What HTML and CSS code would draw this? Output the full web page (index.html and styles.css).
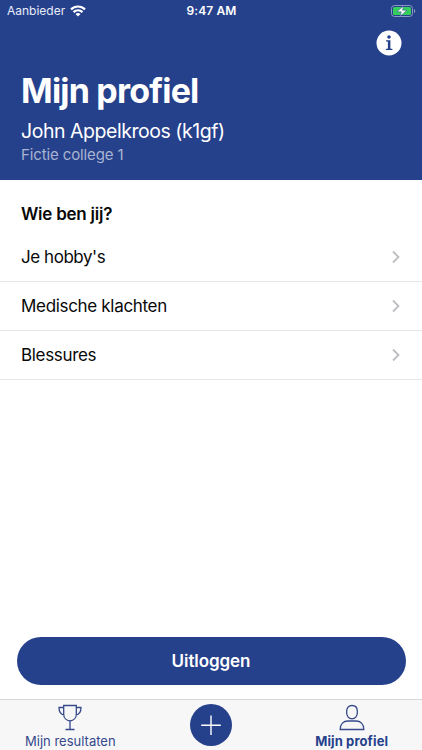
FILE: index.html
```html
<!DOCTYPE html>
<html lang="nl">
<head>
<meta charset="utf-8">
<meta name="viewport" content="width=device-width, initial-scale=1">
<title>Mijn profiel</title>
<link rel="stylesheet" href="styles.css">
</head>
<body>
<div class="app">
  <header class="header">
    <div class="status">
      <div class="status-left">
        <span class="carrier">Aanbieder</span>
        <svg class="wifi" width="16" height="12" viewBox="0 0 16 12" fill="none" stroke="#fff" stroke-width="2.2">
          <path d="M1 4.400C5 .5 11 .5 15 4.400M3.500 7.100C6.100 4.700 9.900 4.700 12.500 7.100"/>
          <path d="M8 11.400 5.500 8.900C6.900 7.700 9.100 7.700 10.500 8.900Z" fill="#fff" stroke="none"/>
        </svg>
      </div>
      <span class="time">9:47 AM</span>
      <svg class="battery" width="25" height="12" viewBox="0 0 25 12">
        <rect x=".5" y=".5" width="21" height="11" rx="3" fill="none" stroke="#8c9bc5"/>
        <rect x="2" y="2" width="18" height="8" rx="1.6" fill="#35d05c"/>
        <path d="M23 4v4c.8-.3 1.200-1 1.200-2S23.800 4.300 23 4Z" fill="#8c9bc5"/>
        <path d="M12.600 1 5.800 6.800H10.300L9 11.200 16 5.200H11.500Z" fill="#fff" stroke="#26418c" stroke-width=".5"/>
      </svg>
    </div>
    <div class="actions">
      <svg width="26" height="26" viewBox="0 0 26 26">
        <circle cx="13" cy="13" r="12.500" fill="#fff"/>
        <circle cx="13" cy="7" r="1.800" fill="#26418c"/>
        <path d="M10 10.300H14.400V18.600L16.400 19V20H9.900V19L11.900 18.600V11.700L10 11.300Z" fill="#26418c"/>
      </svg>
    </div>
    <h1 class="title">Mijn profiel</h1>
    <p class="name">John Appelkroos (k1gf)</p>
    <p class="school">Fictie college 1</p>
  </header>
  <main class="content">
    <h2 class="section-title">Wie ben jij?</h2>
    <ul class="list">
      <li class="row"><span class="hobby">Je hobby's</span><svg class="chevron" width="10" height="14" viewBox="0 0 10 14"><path d="M2 1.500 7.500 7 2 12.500"/></svg></li>
      <li class="row"><span class="medical">Medische klachten</span><svg class="chevron" width="10" height="14" viewBox="0 0 10 14"><path d="M2 1.500 7.500 7 2 12.500"/></svg></li>
      <li class="row"><span class="injury">Blessures</span><svg class="chevron" width="10" height="14" viewBox="0 0 10 14"><path d="M2 1.500 7.500 7 2 12.500"/></svg></li>
    </ul>
    <button class="logout"><span>Uitloggen</span></button>
  </main>
  <nav class="tabs">
    <a class="tab">
      <svg width="26" height="28" viewBox="0 0 26 28">
        <path d="M6.700 1.500H19.300V10.500C19.300 14 16.500 16.500 13 17 9.500 16.500 6.700 14 6.700 10.500ZM6.700 3.500H2C2 8 4 10.500 7.200 11M19.300 3.500H24C24 8 22 10.500 18.800 11M13 17V25.500M8.500 25.500H17.500"/>
      </svg>
      <span class="results">Mijn resultaten</span>
    </a>
    <a class="add">
      <svg width="42" height="42" viewBox="0 0 42 42"><circle cx="21" cy="21" r="21"/><path d="M21 11.500V31M11.200 21.200H30.800"/></svg>
    </a>
    <a class="tab active">
      <svg width="26" height="28" viewBox="0 0 26 28">
        <path d="M13 1.500C16.200 1.500 18.300 3.600 18.300 7V9C18.300 12.200 16.200 14.800 13 14.800S7.700 12.200 7.700 9V7C7.700 3.600 9.800 1.500 13 1.500ZM1.200 25.500C1.200 20 4.500 17 9 17H17C21.500 17 24.800 20 24.800 25.500Z"/>
      </svg>
      <span class="profile">Mijn profiel</span>
    </a>
  </nav>
</div>
</body>
</html>
```
FILE: styles.css
```css
* { box-sizing: border-box; margin: 0; padding: 0; }
body { background: #fff; font-family: Inter, "Liberation Sans", sans-serif; color: #080808; }
svg { display: block; flex: none; }
.app { width: 422px; height: 750px; display: flex; flex-direction: column; overflow: hidden; }
.header { height: 179.500px; flex: none; background: #26418c; color: #fff; }
.status { height: 22px; padding: 0 6px 0 7px; display: grid; grid-template-columns: 1fr auto 1fr; align-items: center; font-size: 12px; line-height: 22px; }
.status-left { display: flex; align-items: center; gap: 5px; }
.carrier { color: #e8ecf8; }
.time { font-weight: 600; letter-spacing: .1px; }
.battery { justify-self: end; }
.actions { height: 48px; padding: 8px 20px 0 0; display: flex; justify-content: flex-end; }
.title { padding-left: 21px; font-size: 34px; line-height: 42px; font-weight: 700; letter-spacing: -.8px; }
.name { padding-left: 21px; margin-top: 7px; font-size: 19.500px; line-height: 24px; letter-spacing: -.46px; }
.school { padding-left: 21px; margin-top: 2px; font-size: 15px; line-height: 19px; letter-spacing: -.12px; color: #a8b3d1; }
.content { flex: 1; display: flex; flex-direction: column; padding-top: 23.500px; }
.section-title { padding-left: 21px; font-size: 17px; line-height: 23px; font-weight: 600; letter-spacing: -.24px; }
.list { list-style: none; margin-top: 7px; }
.row { height: 49px; padding: 0 21px; border-bottom: 1px solid #e6e6e8; display: flex; align-items: center; justify-content: space-between; font-size: 17px; line-height: 22px; letter-spacing: -.32px; }
.hobby { letter-spacing: -.45px; }
.chevron { fill: none; stroke: #bebec2; stroke-width: 1.800; }
.logout { margin: auto 16.500px 14px 16.500px; height: 48.500px; border: 0; border-radius: 25px; background: #26418c; color: #fff; font: 600 17px/49px Inter, sans-serif; letter-spacing: -.08px; }
.tabs { height: 51px; flex: none; background: #f7f7f8; border-top: 1px solid #d8d8da; display: grid; grid-template-columns: 1fr 1fr 1fr; color: #35498b; }
.tab { display: flex; flex-direction: column; align-items: center; padding-top: 4px; font-size: 13px; line-height: 18px; }
.tab svg { fill: none; stroke: #35498b; stroke-width: 1.300; }
.tab.active { font-weight: 700; color: #26418c; }
.profile { letter-spacing: .12px; }
.add { display: flex; justify-content: center; padding-top: 4px; }
.add circle { fill: #26418c; }
.add path { fill: none; stroke: #fff; stroke-width: 1.400; }
```
